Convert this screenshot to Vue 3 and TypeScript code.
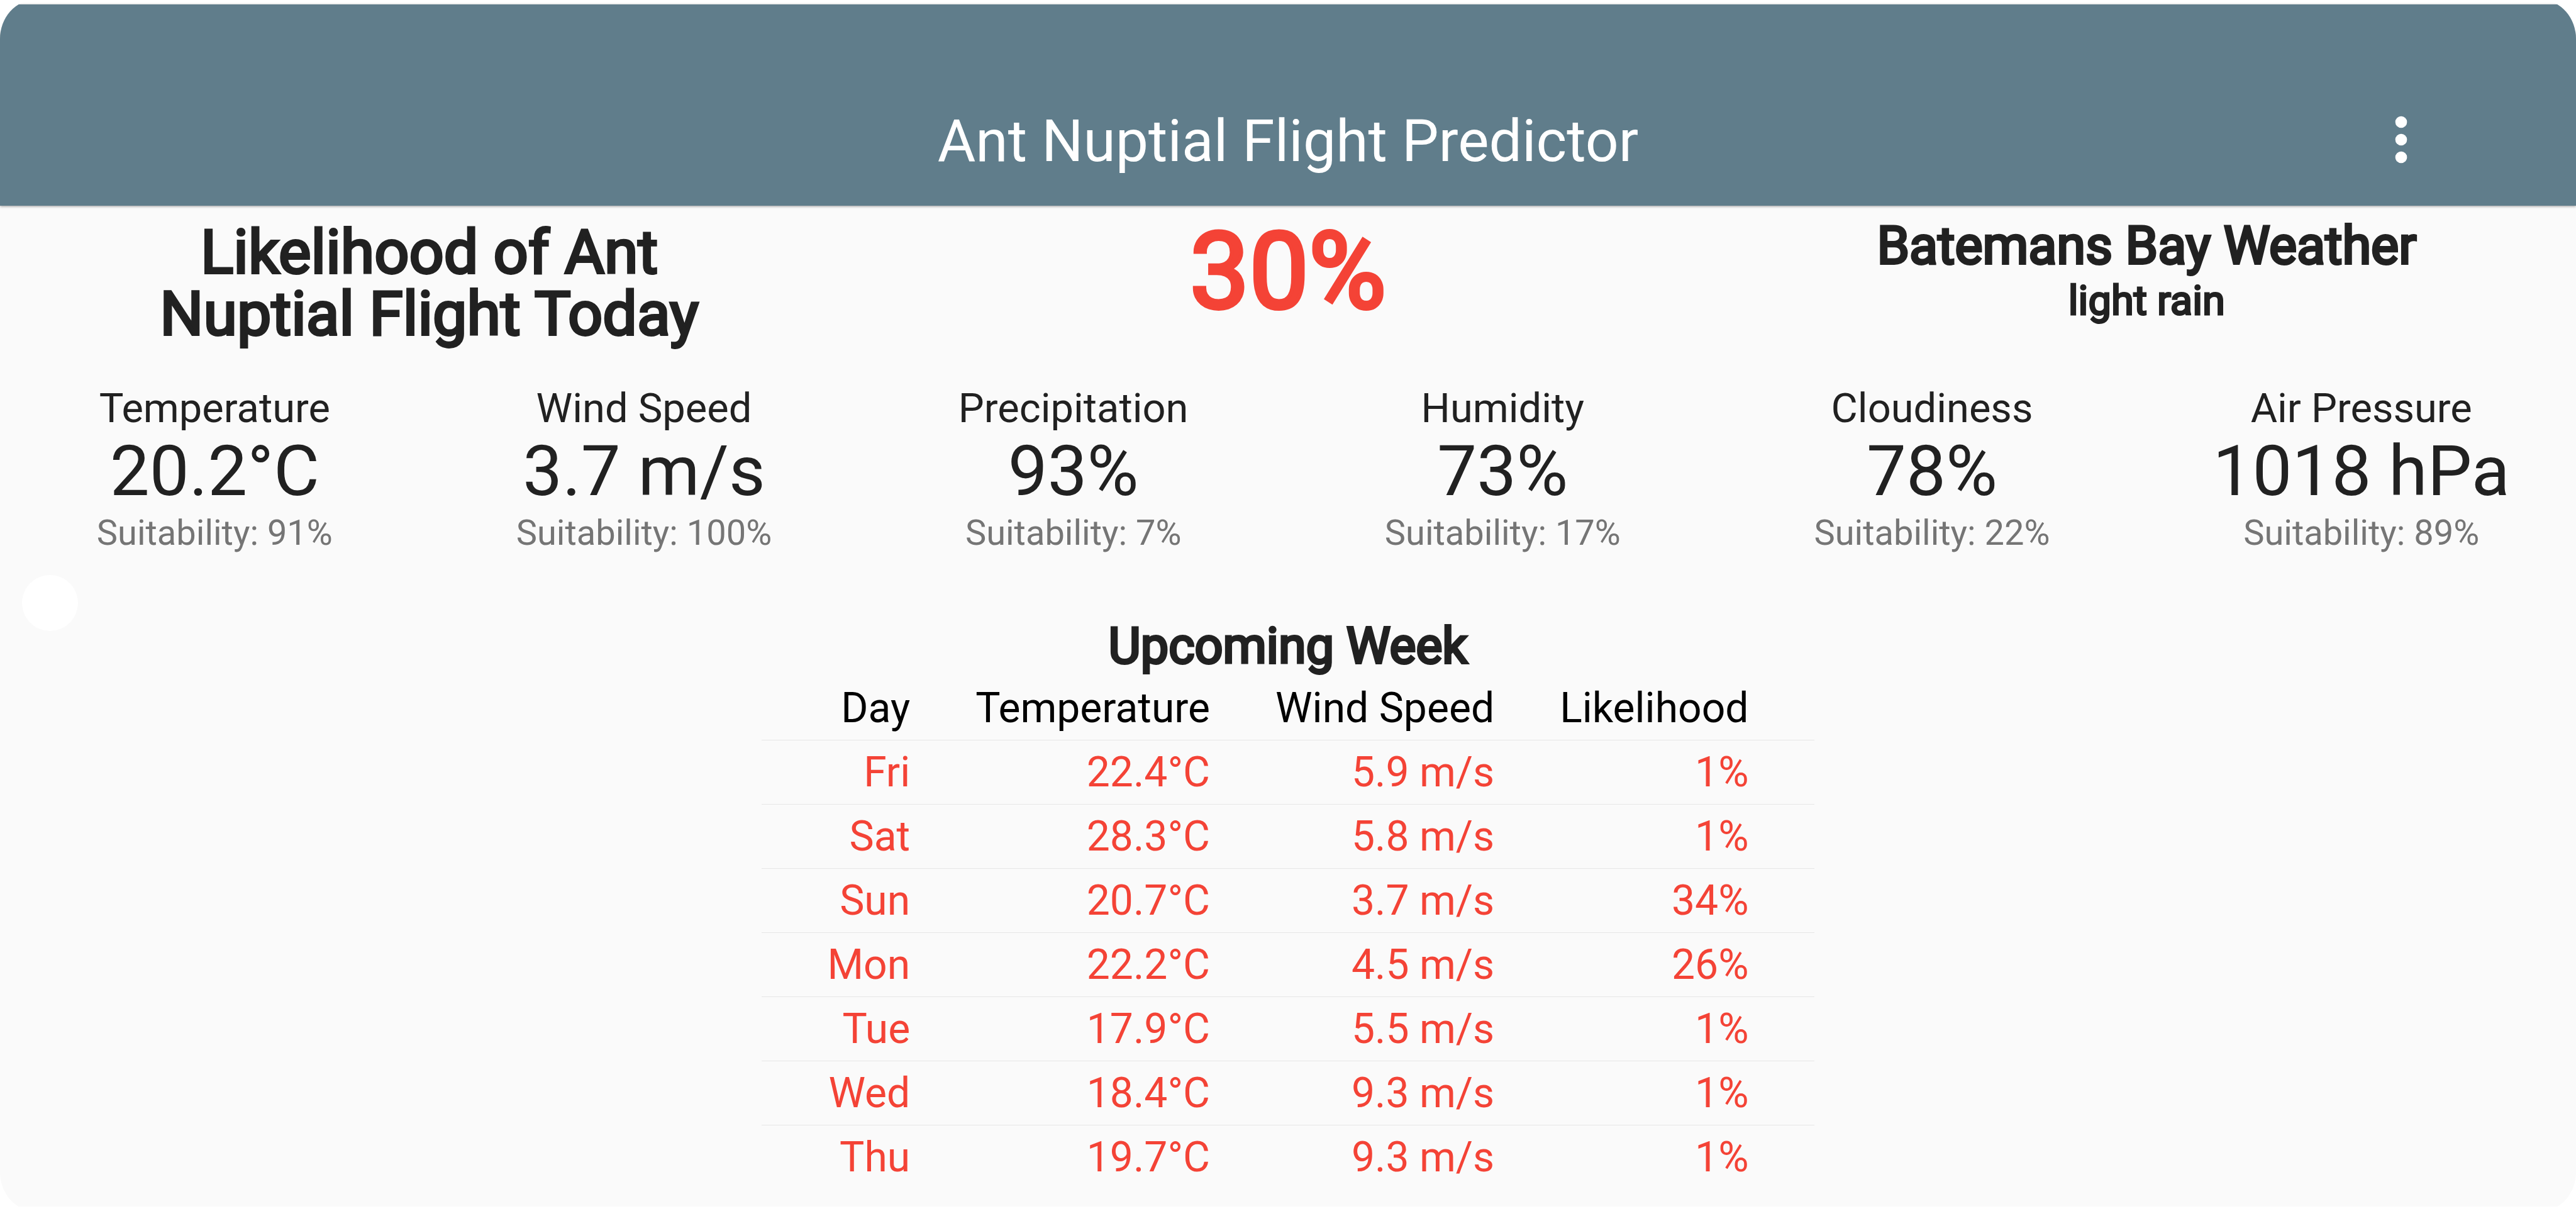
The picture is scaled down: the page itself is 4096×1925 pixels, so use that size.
<script setup lang="ts">
interface Metric {
  label: string
  value: string
  suitability: number
}

interface Forecast {
  day: string
  temperature: string
  wind: string
  likelihood: string
}

const metrics: Metric[] = [
  { label: 'Temperature', value: '20.2°C', suitability: 91 },
  { label: 'Wind Speed', value: '3.7 m/s', suitability: 100 },
  { label: 'Precipitation', value: '93%', suitability: 7 },
  { label: 'Humidity', value: '73%', suitability: 17 },
  { label: 'Cloudiness', value: '78%', suitability: 22 },
  { label: 'Air Pressure', value: '1018 hPa', suitability: 89 },
]

const week: Forecast[] = [
  { day: 'Fri', temperature: '22.4°C', wind: '5.9 m/s', likelihood: '1%' },
  { day: 'Sat', temperature: '28.3°C', wind: '5.8 m/s', likelihood: '1%' },
  { day: 'Sun', temperature: '20.7°C', wind: '3.7 m/s', likelihood: '34%' },
  { day: 'Mon', temperature: '22.2°C', wind: '4.5 m/s', likelihood: '26%' },
  { day: 'Tue', temperature: '17.9°C', wind: '5.5 m/s', likelihood: '1%' },
  { day: 'Wed', temperature: '18.4°C', wind: '9.3 m/s', likelihood: '1%' },
  { day: 'Thu', temperature: '19.7°C', wind: '9.3 m/s', likelihood: '1%' },
]
</script>

<template>
  <div class="screen">
    <header class="app-bar">
      <h1 class="title">Ant Nuptial Flight Predictor</h1>
      <button class="menu" type="button" aria-label="More options">
        <svg viewBox="0 0 24 24" aria-hidden="true">
          <circle cx="12" cy="6" r="2" />
          <circle cx="12" cy="12" r="2" />
          <circle cx="12" cy="18" r="2" />
        </svg>
      </button>
    </header>

    <main class="content">
      <section class="summary">
        <h2 class="heading strong">Likelihood of Ant<br />Nuptial Flight Today</h2>
        <p class="chance strong">30%</p>
        <div>
          <h2 class="subheading strong">Batemans Bay Weather</h2>
          <p class="condition strong">light rain</p>
        </div>
      </section>

      <section class="metrics">
        <div v-for="m in metrics" :key="m.label">
          <p class="label">{{ m.label }}</p>
          <p class="value">{{ m.value }}</p>
          <p class="suitability">Suitability: {{ m.suitability }}%</p>
        </div>
      </section>

      <section class="upcoming">
        <div class="spinner"></div>
        <div class="week">
          <h2 class="week-title strong">Upcoming Week</h2>
          <table>
            <thead>
              <tr>
                <th scope="col">Day</th>
                <th scope="col">Temperature</th>
                <th scope="col">Wind Speed</th>
                <th scope="col">Likelihood</th>
              </tr>
            </thead>
            <tbody>
              <tr v-for="f in week" :key="f.day">
                <td>{{ f.day }}</td>
                <td>{{ f.temperature }}</td>
                <td>{{ f.wind }}</td>
                <td>{{ f.likelihood }}</td>
              </tr>
            </tbody>
          </table>
        </div>
      </section>
    </main>
  </div>
</template>

<style>
body {
  margin: 0;
  background: #fff;
}
</style>

<style scoped>
.screen {
  display: flex;
  flex-direction: column;
  box-sizing: border-box;
  min-height: 100vh;
  padding: 7px 0;
  overflow: hidden;
  border-radius: 55px / 62px;
  background: #fff;
  color: #212121;
  font-family: Roboto, "Liberation Sans", sans-serif;
}

h1,
h2,
p {
  margin: 0;
  font-weight: 400;
}

.app-bar {
  display: grid;
  grid-template-columns: 1fr auto 1fr;
  align-items: center;
  box-sizing: border-box;
  height: 320px;
  padding-top: 110px;
  background: #607d8b;
  color: #fff;
  box-shadow: 0 1px 4px rgba(0, 0, 0, 0.4);
  z-index: 1;
}

.title {
  grid-column: 2;
  padding-top: 6px;
  font-size: 93px;
  line-height: 110px;
}

.menu {
  justify-self: end;
  width: 112px;
  height: 112px;
  margin-right: 222px;
  padding: 0;
  border: 0;
  background: none;
  color: inherit;
}

.menu svg {
  display: block;
  width: 112px;
  height: 112px;
  fill: currentColor;
}

.content {
  flex: 1;
  background: #fafafa;
}

.strong {
  -webkit-text-stroke: 4px currentColor;
}

.summary {
  display: grid;
  grid-template-columns: repeat(3, 1fr);
  height: 269px;
  padding-top: 15px;
  text-align: center;
}

.heading {
  padding-top: 10px;
  font-size: 97px;
  line-height: 98px;
}

.chance {
  color: #f44336;
  font-size: 168px;
  line-height: 180px;
  -webkit-text-stroke-width: 6px;
}

.subheading {
  font-size: 83px;
  line-height: 98px;
}

.condition {
  font-size: 65px;
  line-height: 76px;
  -webkit-text-stroke-width: 3px;
}

.metrics {
  display: grid;
  grid-template-columns: repeat(6, 1fr);
  text-align: center;
}

.label {
  font-size: 65px;
  line-height: 76px;
}

.value {
  font-size: 112px;
  line-height: 124px;
}

.suitability {
  color: #757575;
  font-size: 56px;
  line-height: 72px;
}

.upcoming {
  display: grid;
  grid-template-columns: 1fr auto 1fr;
  padding-top: 31px;
}

.spinner {
  width: 89px;
  height: 89px;
  margin-left: 35px;
  border-radius: 50%;
  background: #fff;
}

.week {
  padding-top: 65px;
  text-align: center;
}

.week-title {
  font-size: 79px;
  line-height: 96px;
}

table {
  border-collapse: collapse;
  font-size: 66px;
  line-height: 76px;
}

th,
td {
  height: 101px;
  padding: 0 0 0 104px;
  font-weight: 400;
  text-align: right;
  white-space: nowrap;
}

th {
  color: #000;
}

th:last-child,
td:last-child {
  padding-right: 104px;
}

td {
  border-top: 1px solid #e6e6e6;
  color: #f44336;
}
</style>
